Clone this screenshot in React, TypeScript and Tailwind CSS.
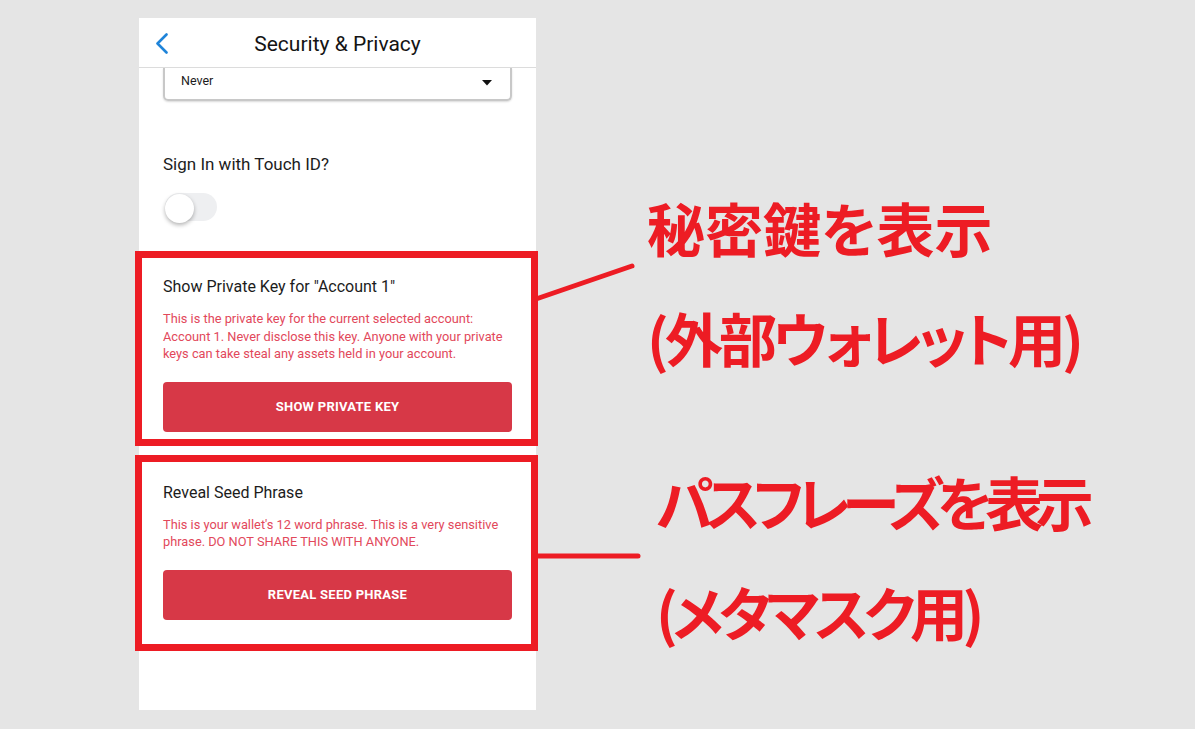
import React from 'react';

const ui = { fontFamily: 'Roboto, "Liberation Sans", sans-serif' };
const jp = { fontFamily: '"Noto Sans CJK JP", "Noto Sans", sans-serif' };

function Section({
  title,
  desc,
  button,
  className
}: {title: string;desc: string;button: string;className: string;}) {
  return (
    <div className={`-ml-[4px] w-[403px] border-[7px] border-[#ed1c24] pl-[21px] pr-[19px] ${className}`}>
      <h3 className="text-[16px] leading-5 text-[#1c1c1c]">{title}</h3>
      <p className="mt-[13px] text-[12.8px] leading-[17.5px] text-[#e2485b]">{desc}</p>
      <button className="mt-[19px] flex h-[50px] w-full items-center justify-center rounded-[4px] bg-[#d73847] text-[13px] font-bold tracking-[0.02em] text-white">
        {button}
      </button>
    </div>);

}

export default function App() {
  return (
    <div className="relative flex h-[729px] w-[1195px] overflow-hidden bg-[#e5e5e5]" style={ui}>
      {/* phone screen */}
      <div className="ml-[139px] mt-[18px] flex h-[692px] w-[397px] flex-col bg-white">
        <div className="relative z-10 grid h-[50px] grid-cols-[60px_1fr_60px] items-center border-b border-[#dcdcdc] bg-white">
          <svg width="14" height="21" viewBox="0 0 14 21" className="ml-[16px] mt-[2px]">
            <path d="M11.5 1.5 L2.5 10.5 L11.5 19.5" fill="none" stroke="#1f84d9" strokeWidth="2.6" strokeLinecap="round" strokeLinejoin="round" />
          </svg>
          <h1 className="mt-[4px] text-center text-[21px] text-[#141414]">Security &amp; Privacy</h1>
          <div />
        </div>

        <div className="mx-6 flex h-[33px] items-start justify-between rounded-b-[5px] border-2 border-t-0 border-[#c8c8c8] pl-4 pr-[18px] pt-[6px] shadow-[0_1px_2px_rgba(0,0,0,0.15)]">
          <span className="text-[12.5px] leading-[14px] text-[#1c1c1c]">Never</span>
          <svg width="10" height="6" viewBox="0 0 10 6" className="mt-[6px]">
            <path d="M0 0 H10 L5 5.5 Z" fill="#111" />
          </svg>
        </div>

        <p className="ml-6 mt-[53px] text-[17px] leading-5 text-[#1c1c1c]">Sign In with Touch ID?</p>

        <div className="relative ml-6 mt-[19px] h-[29px] w-[54px]">
          <div className="absolute left-[2px] top-0 h-[28px] w-[52px] rounded-full bg-[#eeeff1]" />
          <div className="absolute left-[2px] top-[1px] h-[29px] w-[29px] rounded-full bg-white shadow-[0_2px_4px_rgba(0,0,0,0.3)]" />
        </div>

        <Section
          className="mt-[29px] pb-[7px] pt-[19px]"
          title={'Show Private Key for "Account 1"'}
          desc="This is the private key for the current selected account: Account 1. Never disclose this key. Anyone with your private keys can take steal any assets held in your account."
          button="SHOW PRIVATE KEY" />

        <Section
          className="mt-[9px] pb-[24px] pt-[21px]"
          title="Reveal Seed Phrase"
          desc="This is your wallet's 12 word phrase. This is a very sensitive phrase. DO NOT SHARE THIS WITH ANYONE."
          button="REVEAL SEED PHRASE" />
      </div>

      {/* annotations */}
      <div
        className="ml-[111px] mt-[172px] flex flex-col text-[58px] font-bold leading-[110px] text-[#ed1c24] [font-feature-settings:'palt']"
        style={jp}>
        <p className="whitespace-nowrap">秘密鍵を表示</p>
        <p className="whitespace-nowrap tracking-[-4px]">(外部ウォレット用)</p>
        <p className="mt-[54px] whitespace-nowrap pl-[9px] tracking-[-7.5px]">パスフレーズを表示</p>
        <p className="whitespace-nowrap pl-[9px] tracking-[-5.5px]">(メタマスク用)</p>
      </div>

      <svg className="pointer-events-none absolute left-0 top-0" width="1195" height="729">
        <line x1="536" y1="299" x2="632" y2="266" stroke="#ed1c24" strokeWidth="5" strokeLinecap="round" />
        <line x1="536" y1="556" x2="638" y2="556" stroke="#ed1c24" strokeWidth="5" strokeLinecap="round" />
      </svg>
    </div>);

}
